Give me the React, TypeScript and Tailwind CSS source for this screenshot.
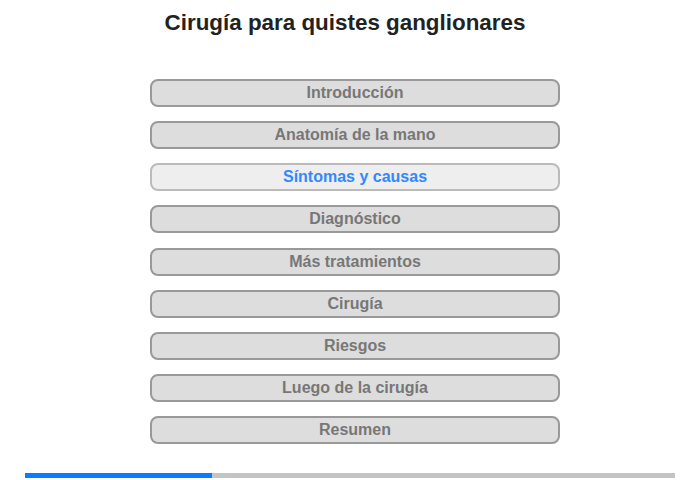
import React from 'react';

const SECTIONS = [
  'Introducción',
  'Anatomía de la mano',
  'Síntomas y causas',
  'Diagnóstico',
  'Más tratamientos',
  'Cirugía',
  'Riesgos',
  'Luego de la cirugía',
  'Resumen',
];

const ACTIVE = 2;

const App: React.FC = () => {
  return (
    <div className="w-[700px] h-[480px] bg-white font-['Liberation_Sans',Arial,sans-serif] flex flex-col">
      <h1 className="text-[22.4px] leading-[26px] font-bold text-[#222] text-center pt-[10px] mr-[10px]">
        Cirugía para quistes ganglionares
      </h1>

      <div className="flex flex-col gap-[14.125px] ml-[150px] w-[410px] mt-[43px]">
        {SECTIONS.map((s, i) => (
          <div
            key={s}
            className={
              i === ACTIVE
                ? 'h-[28px] rounded-[8px] border-2 border-[#bbb] bg-[#eee] text-[#3388ff] flex items-center justify-center text-[16px] font-bold'
                : 'h-[28px] rounded-[8px] border-2 border-[#999] bg-[#ddd] text-[#777] flex items-center justify-center text-[16px] font-bold'
            }
          >
            {s}
          </div>
        ))}
      </div>

      <div className="mt-[29px] ml-[25px] w-[650px] h-[5px] bg-[#c4c4c4] flex">
        <div className="w-[187px] h-full bg-[#0a7cff]" />
      </div>
    </div>
  );
};

export default App;
